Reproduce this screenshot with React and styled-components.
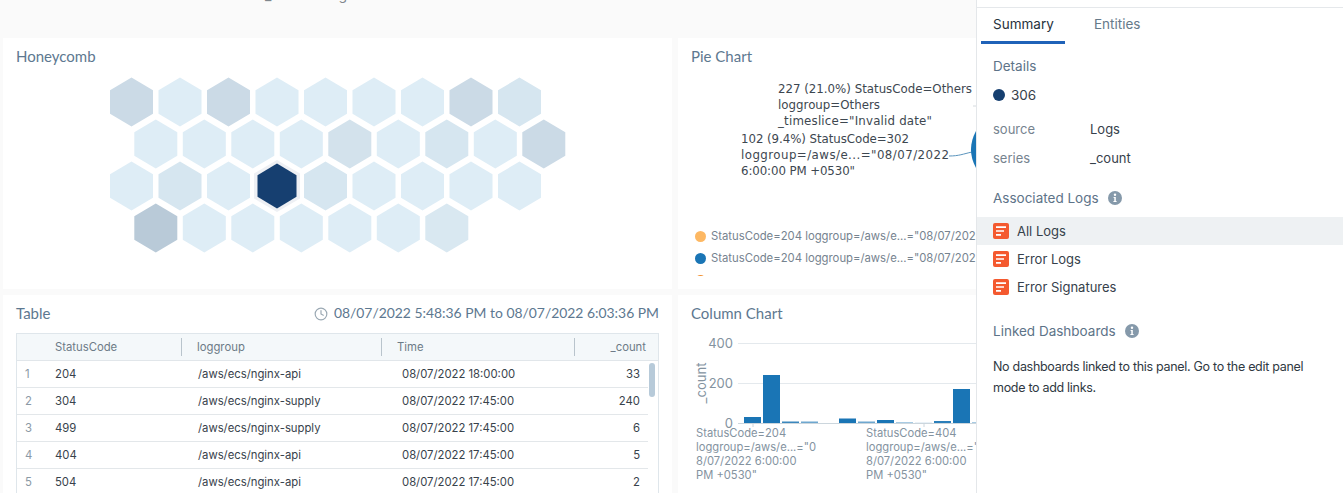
import styled, { createGlobalStyle } from 'styled-components';
import { Clock } from 'lucide-react';

const Global = createGlobalStyle`
  html, body { margin: 0; padding: 0; background: #fafafa; }
  body { font-family: "Inter", "Liberation Sans", sans-serif; }
`

const Page = styled.div`
  position: relative;
  width: 1343px;
  height: 493px;
  overflow: hidden;
  background: #fafafa;
`

const TopStrip = styled.div`
  height: 38px;
  padding-left: 265px;
  display: flex;
  gap: 67px;
  font-size: 14px;
  line-height: 16px;
  color: #80878d;
  overflow: hidden;
  span { margin-top: -13px; }
`

const Board = styled.div`
  display: grid;
  grid-template-columns: 669px 670px;
  grid-template-rows: 251px 251px;
  gap: 6px;
  padding-left: 3px;
`

const Card = styled.section`
  background: #fff;
  padding: 0 13px;
  overflow: hidden;
  min-width: 0;
`

const CardHead = styled.header`
  display: flex;
  justify-content: space-between;
  align-items: center;
  box-sizing: border-box;
  height: 37px;
  padding-bottom: 2px;
`

const CardTitle = styled.h2`
  margin: 0;
  font-family: "Lato", sans-serif;
  font-size: 15px;
  font-weight: 400;
  color: #5d7890;
`

const Range = styled.div`
  display: flex;
  align-items: center;
  gap: 6px;
  font-family: "Lato", sans-serif;
  font-size: 13.9px;
  color: #5d7890;
  svg { color: #9aa8b3; margin-top: 2px; }
`

const ChartSvg = styled.svg`
  display: block;
  overflow: visible;
`

const Legend = styled.ul`
  list-style: none;
  margin: 0;
  padding: 0 0 0 4px;
  height: 47px;
  overflow: hidden;
  display: flex;
  flex-direction: column;
  gap: 8px;
`

const LegendItem = styled.li`
  display: flex;
  align-items: center;
  gap: 5px;
  height: 14px;
  flex: none;
  font-size: 11.3px;
  color: #76838f;
  white-space: nowrap;
`

const Dot = styled.i`
  width: ${p => p.$size || 11}px;
  height: ${p => p.$size || 11}px;
  border-radius: 50%;
  background: ${p => p.$color};
  flex: none;
`

const TableBox = styled.div`
  position: relative;
  border: 1px solid #dfe6eb;
  border-bottom: 0;
  margin-top: 1px;
  height: 200px;
  font-size: 11.3px;
`

const HeadRow = styled.div`
  display: grid;
  grid-template-columns: 38px 127px 200px 193px 1fr;
  height: 26px;
  align-items: center;
  background: #f4f8fa;
  border-bottom: 1px solid #e1e6ea;
  color: #6d7b87;
`

const HeadCell = styled.div`
  height: 18px;
  line-height: 18px;
  padding-left: ${p => (p.$first ? 0 : 15)}px;
  padding-right: ${p => (p.$right ? 12 : 0)}px;
  text-align: ${p => (p.$right ? 'right' : 'left')};
  border-right: ${p => (p.$line ? '1px solid #b9c4cc' : '0')};
`

const BodyRow = styled.div`
  display: grid;
  grid-template-columns: 38px 143px 204px 1fr 47px;
  align-items: center;
  width: 631px;
  height: 26px;
  border-bottom: 1px solid #e3e7ea;
  color: #38424b;
`

const IndexCell = styled.div`
  padding-left: 8px;
  color: #8b99a5;
`

const CountCell = styled.div`
  text-align: right;
  padding-right: 8px;
`

const ScrollThumb = styled.div`
  position: absolute;
  top: 29px;
  right: 3px;
  width: 6px;
  height: 34px;
  border-radius: 3px;
  background: #b7cad9;
`

const Drawer = styled.aside`
  position: absolute;
  top: 0;
  right: 0;
  bottom: 0;
  width: 367px;
  box-sizing: border-box;
  background: #fff;
  border-left: 1px solid #e4e7ea;
  font-size: 13px;
  color: #36414b;
`

const DrawerTop = styled.div`
  height: 7px;
  border-bottom: 1px solid #e5e8eb;
`

const Tabs = styled.nav`
  display: flex;
  padding-left: 4px;
  height: 36px;
`

const Tab = styled.div`
  width: ${p => p.$width}px;
  box-sizing: border-box;
  padding: 8px 0 0 ${p => p.$pad}px;
  font-size: 13.5px;
  height: 36px;
  margin-right: 12px;
  color: ${p => (p.$active ? '#27323c' : '#667a8a')};
  border-bottom: 3px solid ${p => (p.$active ? '#1f62b8' : 'transparent')};
`

const Section = styled.div`
  padding: ${p => p.$top}px 16px 0;
`

const Heading = styled.h3`
  display: flex;
  align-items: center;
  gap: 9px;
  margin: 0;
  height: 18px;
  font-size: 13.5px;
  font-weight: 400;
  color: #5d7388;
`

const ValueLine = styled.div`
  display: flex;
  align-items: center;
  gap: 6px;
  height: 18px;
  margin-top: 11px;
  margin-bottom: 10px;
  font-size: 13.5px;
`

const Meta = styled.div`
  display: grid;
  grid-template-columns: 97px 1fr;
  height: 29px;
  align-items: center;
  span:first-child { color: #76838f; }
`

const LogList = styled.div`
  margin-top: 10px;
`

const LogRow = styled.div`
  display: flex;
  align-items: center;
  gap: 8px;
  height: 28px;
  padding-left: 16px;
  background: ${p => (p.$active ? '#eef1f3' : 'transparent')};
`

const Note = styled.p`
  margin: 16px -8px 0 0;
  font-size: 12.5px;
  letter-spacing: -0.3px;
  line-height: 21px;
  color: #2f3942;
`

const hexPoints = (cx, cy, w, h) =>
  [
    [cx, cy - h / 2],
    [cx + w / 2, cy - h / 4.2],
    [cx + w / 2, cy + h / 4.2],
    [cx, cy + h / 2],
    [cx - w / 2, cy + h / 4.2],
    [cx - w / 2, cy - h / 4.2],
  ].map(p => p.join(',')).join(' ')

const honeycomb = [
  ['#cbdae6', '#deedf6', '#cbdae6', '#deedf6', '#deedf6', '#deedf6', '#deedf6', '#cbdae6', '#d6e6f0'],
  ['#deedf6', '#deedf6', '#deedf6', '#deedf6', '#d3e2ec', '#deedf6', '#d6e6f0', '#deedf6', '#cbdae6'],
  ['#deedf6', '#d6e6f0', '#deedf6', 'selected', '#d6e6f0', '#deedf6', '#deedf6', '#deedf6', '#deedf6'],
  ['#b9cad8', '#deedf6', '#deedf6', '#deedf6', '#deedf6', '#deedf6', '#d9e8f1'],
]

const Honeycomb = () => (
  <ChartSvg width="644" height="200">
    {honeycomb.map((row, r) =>
      row.map((fill, c) => {
        const cx = 115.5 + c * 48.5 + (r % 2 ? 24.3 : 0)
        const cy = 27 + r * 42
        if (fill === 'selected') {
          return (
            <g key={`${r}-${c}`}>
              <polygon points={hexPoints(cx, cy, 46, 52)} fill="#eef0f4" />
              <polygon points={hexPoints(cx, cy, 39, 45)} fill="#163f70" />
            </g>
          )
        }
        return <polygon key={`${r}-${c}`} points={hexPoints(cx, cy, 43, 49)} fill={fill} />
      })
    )}
  </ChartSvg>
)

const pieText = { fontFamily: '"DejaVu Sans", sans-serif', fontSize: 11.8, fill: '#3d4750' }

const pieLabels = [
  [87, 18, '227 (21.0%) StatusCode=Others', 194],
  [87, 34, 'loggroup=Others', 102],
  [87, 50, '_timeslice="Invalid date"', 154],
  [50, 68, '102 (9.4%) StatusCode=302', 168],
  [50, 84, 'loggroup=/aws/e...="08/07/2022', 208],
  [50, 100, '6:00:00 PM +0530"', 114],
]

const PieLabels = () => (
  <ChartSvg width="300" height="154">
    <g style={pieText}>
      {pieLabels.map(([x, y, label, len]) => (
        <text key={label} x={x} y={y} textLength={len}>{label}</text>
      ))}
    </g>
    <path d="M258 81 C268 81 272 79 281 77" fill="none" stroke="#5a94bd" />
    <path d="M282 31h6" stroke="#d5dade" />
    <path d="M285 56 Q275 74.5 285 93 Z" fill="#1a75b5" />
  </ChartSvg>
)

const bars = [
  [744, 417, '#1a75b5'], [763, 375, '#1a75b5'], [782, 421.5, '#3b87bd'], [801, 421.5, '#6ea7cf'],
  [839, 418.5, '#1a75b5'], [858, 421.5, '#6ea7cf'], [877, 420, '#1a75b5'], [896, 422, '#a8cbe3'],
  [915, 422.5, '#d3e3ee'], [934, 421, '#2b7fba'], [953, 389, '#1a75b5'], [972, 422, '#a8cbe3'],
]

const columnText = { fontFamily: '"Inter", sans-serif', fontSize: 11.2, fill: '#84939f' }

const ColumnPlot = () => (
  <ChartSvg width="300" height="170">
    <g transform="translate(-691 -332)">
      <path d="M738 343.5H1000M738 383.5H1000" stroke="#e4e9ed" />
      <path d="M738 423.5H1000" stroke="#ccd6dd" />
      <path d="M753 423v4M924 423v4" stroke="#ccd6dd" />
      {bars.map(([x, y, fill]) => (
        <rect key={x} x={x} y={y} width="17" height={423 - y} fill={fill} />
      ))}
      <g style={columnText}>
        <text x="733" y="347.5" textAnchor="end" style={{ fontSize: 13 }}>400</text>
        <text x="733" y="387.5" textAnchor="end" style={{ fontSize: 13 }}>200</text>
        <text x="733" y="427.5" textAnchor="end" style={{ fontSize: 13 }}>0</text>
        <text transform="translate(706 383) rotate(-90)" textAnchor="middle" style={{ fontSize: 13 }}>_count</text>
        <text x="696" y="437">StatusCode=204</text>
        <text x="696" y="451">loggroup=/aws/e...="0</text>
        <text x="696" y="465">8/07/2022 6:00:00</text>
        <text x="696" y="479">PM +0530"</text>
        <text x="866" y="437">StatusCode=404</text>
        <text x="866" y="451">loggroup=/aws/e...="</text>
        <text x="866" y="465">8/07/2022 6:00:00</text>
        <text x="866" y="479">PM +0530"</text>
      </g>
    </g>
  </ChartSvg>
)

const rows = [
  [1, 204, '/aws/ecs/nginx-api', '08/07/2022 18:00:00', 33],
  [2, 304, '/aws/ecs/nginx-supply', '08/07/2022 17:45:00', 240],
  [3, 499, '/aws/ecs/nginx-supply', '08/07/2022 17:45:00', 6],
  [4, 404, '/aws/ecs/nginx-api', '08/07/2022 17:45:00', 5],
  [5, 504, '/aws/ecs/nginx-api', '08/07/2022 17:45:00', 2],
]

const LogIcon = () => (
  <svg width="16" height="16" viewBox="0 0 16 16">
    <rect width="16" height="16" rx="2" fill="#f4592f" />
    <path d="M3 4.2h10M3 8h8M3 11.8h5" stroke="#fff" strokeWidth="1.7" />
  </svg>
)

const InfoIcon = () => (
  <svg width="14" height="14" viewBox="0 0 14 14">
    <circle cx="7" cy="7" r="7" fill="#8599aa" />
    <circle cx="7" cy="3.8" r="1.2" fill="#fff" />
    <path d="M5.6 6h2.2v4h.8v1H5.4v-1h.9V7h-.7z" fill="#fff" />
  </svg>
)

const App = () => (
  <Page>
    <Global />
    <TopStrip><span>_</span><span>g</span></TopStrip>
    <Board>
      <Card>
        <CardHead><CardTitle>Honeycomb</CardTitle></CardHead>
        <Honeycomb />
      </Card>
      <Card>
        <CardHead><CardTitle>Pie Chart</CardTitle></CardHead>
        <PieLabels />
        <Legend>
          <LegendItem><Dot $color="#fdb863" />StatusCode=204 loggroup=/aws/e...="08/07/2022 6:00:00 PM +0530"</LegendItem>
          <LegendItem><Dot $color="#1a75b5" />StatusCode=204 loggroup=/aws/e...="08/07/2022 5:45:00 PM +0530"</LegendItem>
          <LegendItem><Dot $color="#f28e2c" /></LegendItem>
        </Legend>
      </Card>
      <Card>
        <CardHead>
          <CardTitle>Table</CardTitle>
          <Range><Clock size={14} />08/07/2022 5:48:36 PM to 08/07/2022 6:03:36 PM</Range>
        </CardHead>
        <TableBox>
          <HeadRow>
            <div />
            <HeadCell $first $line>StatusCode</HeadCell>
            <HeadCell $line>loggroup</HeadCell>
            <HeadCell $line>Time</HeadCell>
            <HeadCell $right>_count</HeadCell>
          </HeadRow>
          {rows.map(r => (
            <BodyRow key={r[0]}>
              <IndexCell>{r[0]}</IndexCell>
              <div>{r[1]}</div>
              <div>{r[2]}</div>
              <div>{r[3]}</div>
              <CountCell>{r[4]}</CountCell>
            </BodyRow>
          ))}
          <ScrollThumb />
        </TableBox>
      </Card>
      <Card>
        <CardHead><CardTitle>Column Chart</CardTitle></CardHead>
        <ColumnPlot />
      </Card>
    </Board>
    <Drawer>
      <DrawerTop />
      <Tabs>
        <Tab $active $width={84} $pad={12}>Summary</Tab>
        <Tab $width={80} $pad={17}>Entities</Tab>
      </Tabs>
      <Section $top={13}>
        <Heading>Details</Heading>
        <ValueLine><Dot $color="#163f70" $size={12} />306</ValueLine>
        <Meta><span>source</span><span>Logs</span></Meta>
        <Meta><span>series</span><span>_count</span></Meta>
      </Section>
      <Section $top={17}>
        <Heading>Associated Logs <InfoIcon /></Heading>
      </Section>
      <LogList>
        <LogRow $active><LogIcon />All Logs</LogRow>
        <LogRow><LogIcon />Error Logs</LogRow>
        <LogRow><LogIcon />Error Signatures</LogRow>
      </LogList>
      <Section $top={21}>
        <Heading>Linked Dashboards <InfoIcon /></Heading>
        <Note>No dashboards linked to this panel. Go to the edit panel mode to add links.</Note>
      </Section>
    </Drawer>
  </Page>
)

export default App
